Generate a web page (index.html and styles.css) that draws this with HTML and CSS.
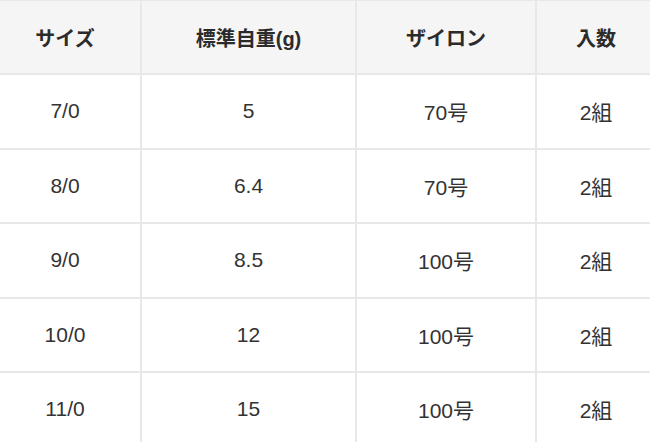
FILE: index.html
```html
<!DOCTYPE html>
<html lang="ja">
<head>
<meta charset="utf-8">
<link rel="stylesheet" href="styles.css">
</head>
<body>
<table class="spec">
  <colgroup>
    <col class="c1"><col class="c2"><col class="c3"><col class="c4">
  </colgroup>
  <thead>
    <tr><th>サイズ</th><th>標準自重(g)</th><th>ザイロン</th><th>入数</th></tr>
  </thead>
  <tbody>
    <tr><td>7/0</td><td>5</td><td>70号</td><td>2組</td></tr>
    <tr><td>8/0</td><td>6.4</td><td>70号</td><td>2組</td></tr>
    <tr><td>9/0</td><td>8.5</td><td>100号</td><td>2組</td></tr>
    <tr><td>10/0</td><td>12</td><td>100号</td><td>2組</td></tr>
    <tr><td>11/0</td><td>15</td><td>100号</td><td>2組</td></tr>
  </tbody>
</table>
</body>
</html>
```
FILE: styles.css
```css
html, body {
  margin: 0;
  padding: 0;
  background: #ffffff;
  overflow: hidden;
}
.spec {
  border-collapse: collapse;
  table-layout: fixed;
  width: 667px;
  margin-left: -12px;
  margin-top: -1px;
  font-family: "Liberation Sans", "Noto Sans CJK JP", sans-serif;
  font-size: 21px;
  color: #333333;
}
.c1 { width: 152px; }
.c2 { width: 215px; }
.c3 { width: 180px; }
.c4 { width: 120px; }
.spec th, .spec td {
  border: 2px solid #e8e8e8;
  text-align: center;
  vertical-align: middle;
  padding: 0;
  height: 72.5px;
}
.spec th {
  background: #f5f5f5;
  font-weight: bold;
  font-size: 20px;
  color: #2b2b2b;
  height: 72px;
}
```
